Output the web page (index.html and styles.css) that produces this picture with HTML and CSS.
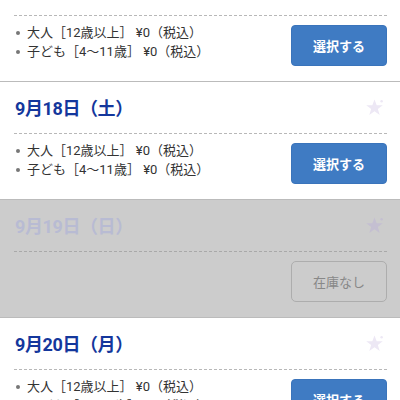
FILE: index.html
```html
<!DOCTYPE html>
<html lang="ja">
<head>
<meta charset="UTF-8">
<meta name="viewport" content="width=device-width, initial-scale=1.0">
<title>日付を選択</title>
<link rel="stylesheet" href="styles.css">
</head>
<body>
<div class="days">
    <div class="day">
        <div class="day-head">
            <h2 class="date">9月17日（金）</h2>
            <svg class="star" viewBox="0 0 20 20"><path d="M10 1.5l2.3 6.1h6.4l-5.2 3.9 2 6.3L10 14l-5.5 3.8 2-6.3L1.3 7.6h6.4z"/><circle cx="17.5" cy="3.5" r="1.3"/></svg>
        </div>
        <div class="day-body">
            <ul class="prices">
                <li>大人［12歳以上］ ¥0（税込）</li>
                <li>子ども［4〜11歳］ ¥0（税込）</li>
            </ul>
            <button class="btn">選択する</button>
        </div>
    </div>
    <div class="day">
        <div class="day-head">
            <h2 class="date">9月18日（土）</h2>
            <svg class="star" viewBox="0 0 20 20"><path d="M10 1.5l2.3 6.1h6.4l-5.2 3.9 2 6.3L10 14l-5.5 3.8 2-6.3L1.3 7.6h6.4z"/><circle cx="17.5" cy="3.5" r="1.3"/></svg>
        </div>
        <div class="day-body">
            <ul class="prices">
                <li>大人［12歳以上］ ¥0（税込）</li>
                <li>子ども［4〜11歳］ ¥0（税込）</li>
            </ul>
            <button class="btn">選択する</button>
        </div>
    </div>
    <div class="day soldout">
        <div class="day-head">
            <h2 class="date">9月19日（日）</h2>
            <svg class="star" viewBox="0 0 20 20"><path d="M10 1.5l2.3 6.1h6.4l-5.2 3.9 2 6.3L10 14l-5.5 3.8 2-6.3L1.3 7.6h6.4z"/><circle cx="17.5" cy="3.5" r="1.3"/></svg>
        </div>
        <div class="day-body">
            <ul class="prices"></ul>
            <button class="btn" disabled>在庫なし</button>
        </div>
    </div>
    <div class="day">
        <div class="day-head">
            <h2 class="date">9月20日（月）</h2>
            <svg class="star" viewBox="0 0 20 20"><path d="M10 1.5l2.3 6.1h6.4l-5.2 3.9 2 6.3L10 14l-5.5 3.8 2-6.3L1.3 7.6h6.4z"/><circle cx="17.5" cy="3.5" r="1.3"/></svg>
        </div>
        <div class="day-body">
            <ul class="prices">
                <li>大人［12歳以上］ ¥0（税込）</li>
                <li>子ども［4〜11歳］ ¥0（税込）</li>
            </ul>
            <button class="btn">選択する</button>
        </div>
    </div>
</div>
</body>
</html>
```
FILE: styles.css
```css
body {
    margin: 0;
    padding: 0;
    background: #fff;
    font-family: "Roboto", "Noto Sans CJK JP", sans-serif;
    overflow: hidden;
}
.days {
    margin-top: -36px;
}
.day {
    background: #fff;
    padding: 0 13px 0 14px;
    border-bottom: 1px solid #bbbbbb;
}
.day-head {
    display: flex;
    justify-content: space-between;
    align-items: center;
    height: 51px;
    border-bottom: 1px dashed #b8b8b8;
}
.date {
    margin: 0;
    padding: 2px 0 0 1px;
    font-size: 18px;
    line-height: 22px;
    font-weight: bold;
    color: #14379c;
    letter-spacing: -0.4px;
}
.star {
    width: 19px;
    height: 19px;
    margin-right: 3px;
    fill: #ede8f5;
}
.day-body {
    display: flex;
    justify-content: space-between;
    align-items: flex-start;
    padding: 7px 0 15px;
}
.prices {
    margin: 0;
    padding: 0;
    list-style: none;
}
.prices li {
    position: relative;
    padding-left: 13px;
    font-size: 13px;
    line-height: 19px;
    color: #333;
}
.prices li::before {
    content: "";
    position: absolute;
    left: 2px;
    top: 8px;
    width: 4px;
    height: 4px;
    border-radius: 50%;
    background: #777;
}
.btn {
    margin-top: 2px;
    width: 96px;
    height: 41px;
    border: 1px solid #3a74bb;
    border-radius: 4px;
    background: #3f7bc3;
    color: #fff;
    font-family: inherit;
    font-size: 13px;
    font-weight: bold;
}
.soldout {
    background: #cccccc;
}
.soldout .date {
    color: #b8bbd3;
}
.soldout .star {
    fill: #c4bfd1;
}
.soldout .day-head {
    border-bottom-color: #a9a9a9;
}
.soldout .btn {
    background: transparent;
    border-color: #adadad;
    border-radius: 5px;
    color: #888;
    font-weight: normal;
}
```
